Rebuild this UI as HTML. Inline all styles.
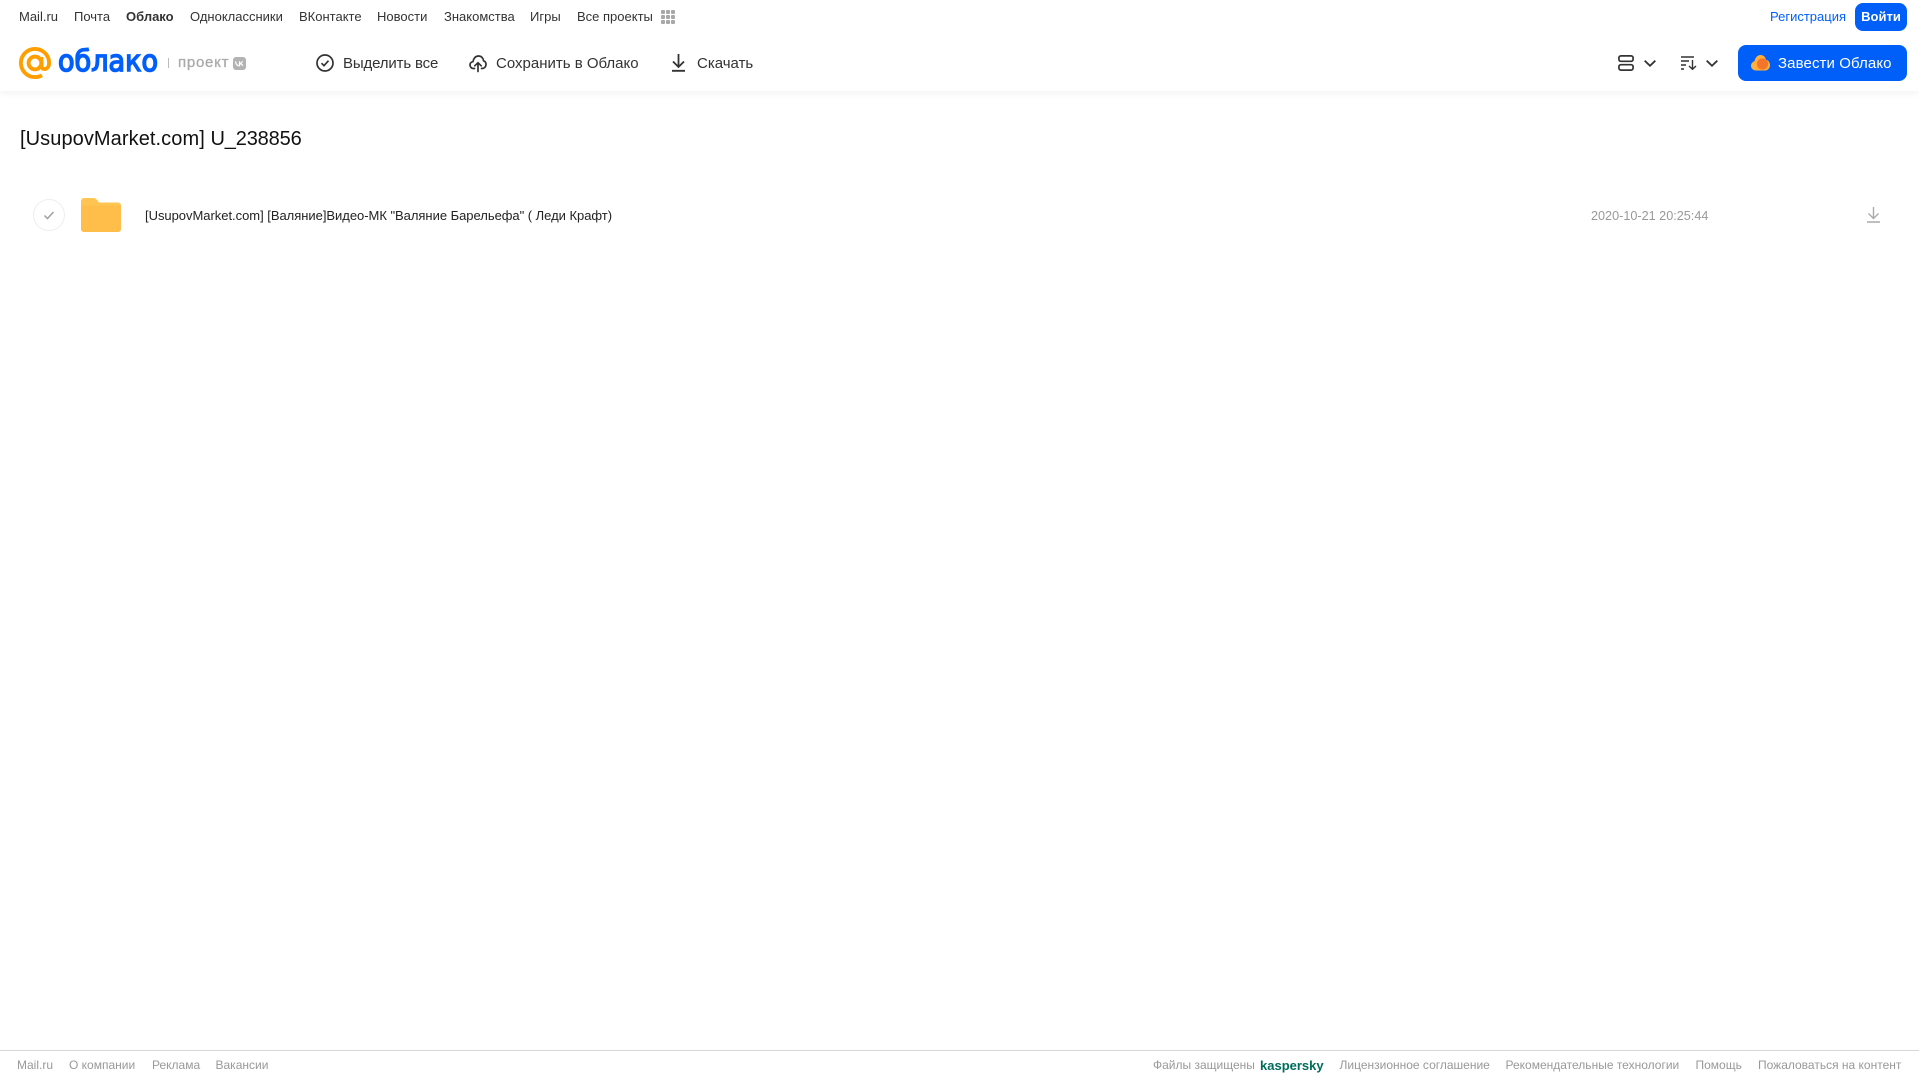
<!DOCTYPE html>
<html lang="ru">
<head>
<meta charset="utf-8">
<title>[UsupovMarket.com] U_238856</title>
<style>
html,body{margin:0;padding:0;background:#fff}
body{position:relative;width:1919px;height:1079px;overflow:hidden;font-family:"Liberation Sans",Arial,sans-serif;color:#333}
.t{position:absolute;white-space:nowrap;display:block;text-decoration:none}
.n{top:8px;font-size:13px;line-height:17px;color:#333}
.a{top:55px;font-size:15px;line-height:18px;color:#333}
.f{top:1058px;font-size:12px;line-height:15px;color:#999}
svg{position:absolute;display:block;overflow:visible}
header{position:absolute;left:0;top:0;width:1919px;height:91px;background:#fff;box-shadow:0 1px 8px rgba(0,0,0,.07)}
footer{position:absolute;left:0;top:1050px;width:1919px;height:29px}
</style>
</head>
<body>
<header>
<a class="t n" style="left:19px">Mail.ru</a>
<a class="t n" style="left:74px">Почта</a>
<a class="t n" style="left:126px;font-weight:bold">Облако</a>
<a class="t n" style="left:190px">Одноклассники</a>
<a class="t n" style="left:299px">ВКонтакте</a>
<a class="t n" style="left:377px">Новости</a>
<a class="t n" style="left:444px">Знакомства</a>
<a class="t n" style="left:530px">Игры</a>
<a class="t n" style="left:577px">Все проекты</a>
<svg style="left:661px;top:10px" width="14" height="14" fill="#a8a8a8"><rect width="4" height="4" rx="1"/><rect x="5" width="4" height="4" rx="1"/><rect x="10" width="4" height="4" rx="1"/><rect y="5" width="4" height="4" rx="1"/><rect x="5" y="5" width="4" height="4" rx="1"/><rect x="10" y="5" width="4" height="4" rx="1"/><rect y="10" width="4" height="4" rx="1"/><rect x="5" y="10" width="4" height="4" rx="1"/><rect x="10" y="10" width="4" height="4" rx="1"/></svg>

<svg style="left:19px;top:47px" width="32" height="32" fill="none" stroke="#ff9e00" stroke-width="3.9"><circle cx="16" cy="16" r="6.4"/><path d="M22.4 10v8.500c0 5.500 7.700 4.600 7.700-2.500C30.100 8.200 23.800 1.900 16 1.900S1.900 8.200 1.900 16 8.200 30.100 16 30.100c2.800 0 5-.6 7-1.800"/></svg>
<svg style="left:58px;top:42px" width="102" height="36"><text x="0" y="29" font-family="'DejaVu Sans',sans-serif" font-size="29" fill="#005ff9" stroke="#005ff9" stroke-width="1.500" textLength="100" lengthAdjust="spacingAndGlyphs">облако</text></svg>
<div style="position:absolute;left:168px;top:58px;width:1px;height:10px;background:#bbb"></div>
<span class="t" style="left:178px;top:54px;font-size:15px;line-height:18px;color:#aaa;letter-spacing:.75px;-webkit-text-stroke:.3px #aaa">проект</span>
<svg style="left:233px;top:57px" width="13" height="13"><rect width="13" height="13" rx="3" fill="#b3b3b3"/><path d="M2.500 4.300c.3 2.700 1.500 4.500 4 4.500V4.300M6.500 6.500c1.500-.2 2.500-1 3-2.200M6.500 6.500c1.500.2 2.700 1.100 3.300 2.300" fill="none" stroke="#fff" stroke-width="1.200"/></svg>

<svg style="left:316px;top:54px" width="18" height="18" fill="none" stroke="#333" stroke-width="1.700"><circle cx="9" cy="9" r="8"/><path d="M5.500 9.200l2.500 2.500 4.500-5"/></svg>
<a class="t a" style="left:343px;letter-spacing:-.15px">Выделить все</a>
<svg style="left:469px;top:54px" width="18" height="18" fill="none" stroke="#333" stroke-width="1.700" stroke-linecap="round" stroke-linejoin="round"><path d="M5.500 14.500H4.500C2.500 14.500 1 13 1 11c0-1.800 1.200-3 3-3.300C4.400 4.400 6.600 2 9.500 2c2.800 0 4.800 2 5 4.800 1.500.5 2.500 1.900 2.500 3.600 0 2.200-1.600 4.100-4 4.100h-.5"/><path d="M9 17.500V9M5.800 11.800L9 8.700l3.200 3.100"/></svg>
<a class="t a" style="left:496px">Сохранить в Облако</a>
<svg style="left:671px;top:54px" width="15" height="18" fill="none" stroke="#333" stroke-width="1.800"><path d="M7.500 0v12.500M2 7.500l5.500 5.500L13 7.500M1 16.800h13"/></svg>
<a class="t a" style="left:697px">Скачать</a>

<svg style="left:1618px;top:55px" width="16" height="16" fill="none" stroke="#333" stroke-width="1.700"><rect x=".9" y=".9" width="14.200" height="5.400" rx="2"/><rect x=".9" y="9.700" width="14.200" height="5.400" rx="2"/></svg>
<svg style="left:1644px;top:60px" width="12" height="7" fill="none" stroke="#333" stroke-width="1.800"><path d="M.7.700L6 5.800 11.300.7"/></svg>
<svg style="left:1681px;top:56px" width="16" height="14" fill="none" stroke="#333" stroke-width="1.400"><path d="M0 1h13M0 5h8M0 9h5M0 13h3M11.500 4v9.200M8 10l3.500 3.300L15 10"/></svg>
<svg style="left:1706px;top:60px" width="12" height="7" fill="none" stroke="#333" stroke-width="1.800"><path d="M.7.700L6 5.800 11.300.7"/></svg>

<a class="t n" style="left:1770px;color:#005ff9">Регистрация</a>
<a class="t" style="left:1855px;top:3px;width:52px;height:28px;line-height:27px;text-align:center;background:#005ff9;border-radius:8px;color:#fff;font-size:13px;font-weight:bold">Войти</a>
<a class="t" style="left:1738px;top:45px;width:169px;height:36px;background:#005ff9;border-radius:8px"></a>
<svg style="left:1751px;top:54px" width="19" height="18"><path d="M5 16.500C2.200 16.500 0 14.500 0 11.800 0 9.500 1.500 7.700 3.500 7.200 4.200 3.500 6.500 1 9.500 1c2.800 0 5 2 5.500 4.800 2.300.5 4 2.700 4 5.400 0 3-2.300 5.300-5 5.300z" fill="#ffb03a"/><circle cx="11.500" cy="10" r="5.600" fill="#f5752a"/></svg>
<span class="t" style="left:1778px;top:55px;font-size:15px;line-height:18px;color:#fff;letter-spacing:.1px">Завести Облако</span>
</header>

<h1 class="t" style="left:20px;top:127px;margin:0;font-size:20px;font-weight:normal;line-height:25px;color:#111"><span style="letter-spacing:.08px">[UsupovMarket.com] </span><span style="letter-spacing:-.15px">U_238856</span></h1>

<svg style="left:33px;top:199px" width="32" height="32" fill="none"><circle cx="16" cy="16" r="15.500" stroke="#eee"/><path d="M11.500 16.500l3 3 6-6.500" stroke="#a0a0a0" stroke-width="1.500"/></svg>
<svg style="left:81px;top:198px" width="40" height="34"><path d="M0 3a3 3 0 0 1 3-3h9c2 0 3 .8 4 2l2 2.500h19a3 3 0 0 1 3 3V31a3 3 0 0 1-3 3H3a3 3 0 0 1-3-3z" fill="#ffc452"/><path d="M0 9.500a2 2 0 0 1 2-2h36a2 2 0 0 1 2 2V31a3 3 0 0 1-3 3H3a3 3 0 0 1-3-3z" fill="#ffbe4a"/></svg>
<a class="t" style="left:145px;top:208px;font-size:13px;line-height:16px;color:#222;letter-spacing:-.03px">[UsupovMarket.com] [Валяние]Видео-МК "Валяние Барельефа" ( Леди Крафт)</a>
<span class="t" style="left:1591px;top:208px;font-size:12.650px;line-height:16px;color:#999">2020-10-21 20:25:44</span>
<svg style="left:1867px;top:207px" width="13" height="16" fill="none" stroke="#aaa" stroke-width="1.400"><path d="M6.500 0v11M1.500 6.500l5 5 5-5M0 15h13"/></svg>

<footer>
<div style="position:absolute;left:0;top:0;width:1919px;height:1px;background:#d8d8d8"></div>
</footer>
<a class="t f" style="left:17px">Mail.ru</a>
<a class="t f" style="left:69px">О компании</a>
<a class="t f" style="left:152px">Реклама</a>
<a class="t f" style="left:215.500px">Вакансии</a>
<a class="t f" style="left:1153px">Файлы защищены</a>
<a class="t f" style="left:1260px;font-size:13px;font-weight:bold;color:#006d5c">kaspersky</a>
<a class="t f" style="left:1339.500px">Лицензионное соглашение</a>
<a class="t f" style="left:1505.500px">Рекомендательные технологии</a>
<a class="t f" style="left:1695.500px">Помощь</a>
<a class="t f" style="left:1758px">Пожаловаться на контент</a>
</body>
</html>
